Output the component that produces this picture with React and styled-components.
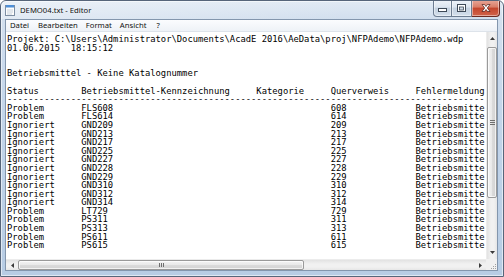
import React from "react";
import styled, { createGlobalStyle } from "styled-components";

const GlobalStyle = createGlobalStyle`
  html, body {
    margin: 0;
    padding: 0;
    background: #fff;
  }
  body {
    width: 504px;
    height: 277px;
    overflow: hidden;
  }
`;

const Window = styled.div`
  box-sizing: border-box;
  width: 504px;
  height: 277px;
  display: flex;
  flex-direction: column;
  border: 1px solid #56657a;
  border-radius: 6px 6px 0 0;
  background: linear-gradient(180deg, #e1eaf4 0px, #d2dfee 18px, #c3d5ea 40%, #b7cce4 100%);
  box-shadow: inset 0 0 0 1px rgba(255, 255, 255, 0.55);
  overflow: hidden;
`;

const TitleBar = styled.div`
  height: 18px;
  display: flex;
  align-items: flex-start;
  flex-shrink: 0;
  background: linear-gradient(90deg, rgba(255, 255, 255, 0.35), rgba(255, 255, 255, 0) 70%);
`;

const AppIcon = styled.svg`
  width: 10px;
  height: 12px;
  margin: 3px 0 0 4px;
  flex-shrink: 0;
`;

const Title = styled.div`
  margin-left: 5px;
  font-family: "Noto Sans", "DejaVu Sans", sans-serif;
  font-size: 7.7px;
  line-height: 18px;
  color: #111;
  text-shadow: 0 0 4px rgba(255, 255, 255, 0.9);
  white-space: nowrap;
`;

const CaptionGroup = styled.div`
  margin-left: auto;
  margin-right: 3px;
  margin-top: -1px;
  display: flex;
  height: 17px;
`;

const CaptionButton = styled.div`
  box-sizing: border-box;
  width: ${(p) => p.$w}px;
  height: 17px;
  display: flex;
  align-items: center;
  justify-content: center;
  border: 1px solid ${(p) => (p.$close ? "#6b2a22" : "#6c7c90")};
  border-top: none;
  border-left-width: ${(p) => (p.$first ? 1 : 0)}px;
  border-radius: ${(p) => (p.$first ? "0 0 0 4px" : p.$close ? "0 0 4px 0" : "0")};
  background: ${(p) =>
    p.$close
      ? "linear-gradient(180deg, #e8a899 0%, #d97c66 45%, #c4452c 50%, #d0634a 100%)"
      : "linear-gradient(180deg, #eef3f9 0%, #dbe4ef 45%, #c4d1e0 50%, #d3dfec 100%)"};
  box-shadow: inset 0 0 0 1px rgba(255, 255, 255, 0.45);
`;

const Client = styled.div`
  flex: 1;
  display: flex;
  flex-direction: column;
  margin: 0 5px 5px 4px;
  border: 1px solid #8396ad;
  background: #fff;
  min-height: 0;
`;

const MenuBar = styled.div`
  height: 11px;
  display: flex;
  align-items: center;
  flex-shrink: 0;
  border-bottom: 1px solid #dde3ea;
  background: linear-gradient(180deg, #fbfcfe, #eef2f7);
`;

const MenuItem = styled.span`
  padding: 0 4px;
  margin-right: ${(p) => p.$gap || 0}px;
  font-family: "Noto Sans", "DejaVu Sans", sans-serif;
  font-size: 7.7px;
  line-height: 11px;
  color: #111;
`;

const Editor = styled.div`
  flex: 1;
  display: grid;
  grid-template-columns: 1fr 11px;
  grid-template-rows: 1fr 11px;
  min-height: 0;
`;

const TextArea = styled.div`
  overflow: hidden;
  padding: 3px 0 0 1px;
  font-family: "DejaVu Sans Mono", "Liberation Mono", monospace;
  font-size: 8.82px;
  line-height: 8.6px;
  color: #000;
`;

const Line = styled.div`
  height: 8.6px;
  white-space: pre;
`;

const VScroll = styled.div`
  display: flex;
  flex-direction: column;
  background: linear-gradient(90deg, #e2e2e2, #f1f1f1 40%, #f1f1f1 70%, #e6e6e6);
  border-left: 1px solid #ececec;
`;

const HScroll = styled.div`
  display: flex;
  align-items: stretch;
  background: linear-gradient(180deg, #e2e2e2, #f1f1f1 40%, #f1f1f1 70%, #e6e6e6);
  border-top: 1px solid #ececec;
`;

const ArrowBox = styled.div`
  flex-shrink: 0;
  width: ${(p) => (p.$horizontal ? "12px" : "100%")};
  height: ${(p) => (p.$horizontal ? "100%" : "13px")};
  display: flex;
  align-items: center;
  justify-content: center;
`;

const Thumb = styled.div`
  box-sizing: border-box;
  flex-shrink: 0;
  display: flex;
  align-items: center;
  justify-content: center;
  border: 1px solid #9a9a9a;
  border-radius: 2px;
  ${(p) =>
    p.$horizontal
      ? `
    width: ${p.$size}px;
    margin: 0;
    background: linear-gradient(180deg, #f4f4f4 0%, #e9e9e9 45%, #dbdbdb 50%, #d3d3d3 100%);
  `
      : `
    height: ${p.$size}px;
    margin: 2px 0 0 0;
    background: linear-gradient(90deg, #f4f4f4 0%, #e9e9e9 45%, #dbdbdb 50%, #d3d3d3 100%);
  `}
  box-shadow: inset 0 0 0 1px rgba(255, 255, 255, 0.7);
`;

const Spacer = styled.div`
  flex: 1;
`;

const SizeGrip = styled.div`
  background: #f0f0f0;
  display: flex;
  align-items: flex-end;
  justify-content: flex-end;
`;

// the edit control shows 90 columns before the vertical scrollbar
const VISIBLE_COLS = 90;

const header =
  "Status".padEnd(14) +
  "Betriebsmittel-Kennzeichnung".padEnd(33) +
  "Kategorie".padEnd(14) +
  "Querverweis".padEnd(16) +
  "Fehlermeldung";

const rows = [
  ["Problem", "FLS608", "608"],
  ["Problem", "FLS614", "614"],
  ["Ignoriert", "GND209", "209"],
  ["Ignoriert", "GND213", "213"],
  ["Ignoriert", "GND217", "217"],
  ["Ignoriert", "GND225", "225"],
  ["Ignoriert", "GND227", "227"],
  ["Ignoriert", "GND228", "228"],
  ["Ignoriert", "GND229", "229"],
  ["Ignoriert", "GND310", "310"],
  ["Ignoriert", "GND312", "312"],
  ["Ignoriert", "GND314", "314"],
  ["Problem", "LT729", "729"],
  ["Problem", "PS311", "311"],
  ["Problem", "PS313", "313"],
  ["Problem", "PS611", "611"],
  ["Problem", "PS615", "615"],
];

const lines = [
  "Projekt: C:\\Users\\Administrator\\Documents\\AcadE 2016\\AeData\\proj\\NFPAdemo\\NFPAdemo.wdp",
  "01.06.2015  18:15:12",
  "",
  "",
  "Betriebsmittel - Keine Katalognummer",
  "",
  header,
  "-".repeat(VISIBLE_COLS),
  ...rows.map(
    ([status, tag, ref]) =>
      status.padEnd(14) + tag.padEnd(33) + "".padEnd(14) + ref.padEnd(16) + "Betriebsmittel ohne Katalognummer"
  ),
].map((l) => l.slice(0, VISIBLE_COLS));

function Arrow({ dir }) {
  const pts = {
    up: "0,3 2.5,0 5,3",
    down: "0,0 2.5,3 5,0",
    left: "3,0 0,2.5 3,5",
    right: "0,0 3,2.5 0,5",
  }[dir];
  const vertical = dir === "up" || dir === "down";
  return (
    <svg width={vertical ? 5 : 3} height={vertical ? 3 : 5} viewBox={vertical ? "0 0 5 3" : "0 0 3 5"}>
      <polygon points={pts} fill="#3a3a3a" />
    </svg>
  );
}

function Grip({ horizontal }) {
  return horizontal ? (
    <svg width="5" height="4" viewBox="0 0 5 4">
      {[0, 2, 4].map((x) => (
        <rect key={x} x={x} y="0" width="1" height="4" fill="#6f6f6f" />
      ))}
    </svg>
  ) : (
    <svg width="5" height="5" viewBox="0 0 5 5">
      {[0, 2, 4].map((y) => (
        <rect key={y} x="0" y={y} width="5" height="1" fill="#6f6f6f" />
      ))}
    </svg>
  );
}

export default function App() {
  return (
    <>
      <GlobalStyle />
      <Window>
        <TitleBar>
          <AppIcon viewBox="0 0 10 12">
            <rect x="0.5" y="1.5" width="9" height="10" fill="#fdfdfd" stroke="#7d8ea3" />
            <rect x="1" y="1" width="8" height="2.5" fill="#4f8fd6" />
            <line x1="2" y1="6" x2="8" y2="6" stroke="#b8c4d2" strokeWidth="0.8" />
            <line x1="2" y1="8" x2="8" y2="8" stroke="#b8c4d2" strokeWidth="0.8" />
            <line x1="2" y1="10" x2="7" y2="10" stroke="#b8c4d2" strokeWidth="0.8" />
          </AppIcon>
          <Title>DEMO04.txt - Editor</Title>
          <CaptionGroup>
            <CaptionButton $w={19} $first>
              <svg width="9" height="8" viewBox="0 0 9 8">
                <rect x="0.5" y="4.5" width="8" height="3" fill="#fff" stroke="#3d4957" />
              </svg>
            </CaptionButton>
            <CaptionButton $w={20}>
              <svg width="9" height="8" viewBox="0 0 9 8">
                <rect x="0.5" y="0.5" width="8" height="7" fill="#fff" stroke="#3d4957" />
                <rect x="2.5" y="3" width="4" height="3" fill="#cfdae6" stroke="#3d4957" strokeWidth="0.8" />
              </svg>
            </CaptionButton>
            <CaptionButton $w={28} $close>
              <svg width="10" height="8" viewBox="0 0 10 8">
                <path
                  d="M1 0.5 L3.5 0.5 L5 2.5 L6.5 0.5 L9 0.5 L6.3 4 L9 7.5 L6.5 7.5 L5 5.5 L3.5 7.5 L1 7.5 L3.7 4 Z"
                  fill="#fff"
                  stroke="#4a1a14"
                  strokeWidth="0.7"
                />
              </svg>
            </CaptionButton>
          </CaptionGroup>
        </TitleBar>
        <Client>
          <MenuBar>
            <MenuItem $gap={1}>Datei</MenuItem>
            <MenuItem>Bearbeiten</MenuItem>
            <MenuItem>Format</MenuItem>
            <MenuItem $gap={2}>Ansicht</MenuItem>
            <MenuItem>?</MenuItem>
          </MenuBar>
          <Editor>
            <TextArea>
              {lines.map((l, i) => (
                <Line key={i}>{l}</Line>
              ))}
            </TextArea>
            <VScroll>
              <ArrowBox>
                <Arrow dir="up" />
              </ArrowBox>
              <Thumb $size={151}>
                <Grip />
              </Thumb>
              <Spacer />
              <ArrowBox>
                <Arrow dir="down" />
              </ArrowBox>
            </VScroll>
            <HScroll>
              <ArrowBox $horizontal>
                <Arrow dir="left" />
              </ArrowBox>
              <Thumb $horizontal $size={286}>
                <Grip horizontal />
              </Thumb>
              <Spacer />
              <ArrowBox $horizontal>
                <Arrow dir="right" />
              </ArrowBox>
            </HScroll>
            <SizeGrip>
              <svg width="8" height="8" viewBox="0 0 8 8">
                {[
                  [6, 2],
                  [4, 4],
                  [6, 4],
                  [2, 6],
                  [4, 6],
                  [6, 6],
                ].map(([x, y]) => (
                  <rect key={`${x}-${y}`} x={x} y={y} width="1" height="1" fill="#a0a0a0" />
                ))}
              </svg>
            </SizeGrip>
          </Editor>
        </Client>
      </Window>
    </>
  );
}
